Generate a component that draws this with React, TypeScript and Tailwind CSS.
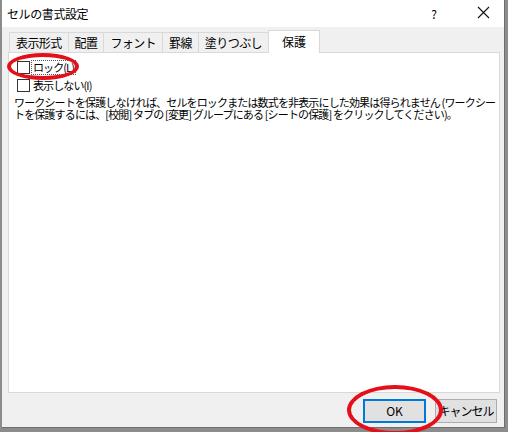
import React from 'react';

const jp = { fontFamily: '"Noto Sans CJK JP", "Noto Sans", sans-serif' };

const tabs = ['表示形式', '配置', 'フォント', '罫線', '塗りつぶし'];

// Little square checkbox in the Windows 10 style
const CheckBox: React.FC<{ label: string; focused?: boolean }> = ({ label, focused }) => (
  <div className="flex items-center h-[13px]">
    <span className="w-[13px] h-[13px] border border-[#333333] bg-white shrink-0" />
    <span
      className={`ml-[2px] px-[1px] text-[11px] leading-[13px] tracking-[-0.9px] text-black ${
        focused ? 'outline outline-1 outline-dotted outline-[#555555]' : ''
      }`}
    >
      {label}
    </span>
  </div>
);

const App: React.FC = () => {
  return (
    <div className="relative w-[508px] h-[432px] bg-[#8c8c8c] overflow-hidden" style={jp}>
      <div className="ml-[2px] w-[503px] h-[428px] flex flex-col bg-[#f0f0f0] border-r border-b border-[#6e6e6e]">
        {/* title bar */}
        <div className="h-[27px] bg-white flex items-center pl-[5px] pr-[14px]">
          <span className="text-[12px] tracking-[-0.4px] text-black">セルの書式設定</span>
          <span className="ml-auto text-[12px] text-black mr-[40px]">?</span>
          <svg width="13" height="13" viewBox="0 0 13 13" className="mb-[2px]">
            <path d="M1 1 L12 12 M12 1 L1 12" stroke="#111" strokeWidth="1.1" />
          </svg>
        </div>

        <div className="flex flex-col px-[6px]">
          {/* tab strip */}
          <div className="flex items-end h-[25px] pl-[1px]">
            {tabs.map((t) => (
              <div
                key={t}
                className="h-[20px] px-[6px] flex items-center border-t border-l border-[#d9d9d9] bg-[#f0f0f0] text-[12px] tracking-[-0.6px] text-black"
              >
                {t}
              </div>
            ))}
            <div className="relative z-10 -mb-px h-[23px] w-[52px] flex items-center justify-center border border-b-0 border-[#d9d9d9] bg-white text-[12px] text-black">
              保護
            </div>
          </div>

          {/* content panel */}
          <div className="h-[341px] w-[492px] bg-white border border-[#d9d9d9] pt-[8px] pl-[8px]">
            <div className="flex flex-col gap-[5px]">
              <CheckBox label="ロック(L)" focused />
              <CheckBox label="表示しない(I)" />
            </div>
            <div className="mt-[4px] -ml-[3px] text-[11px] leading-[12px] tracking-[-0.85px] text-black whitespace-nowrap">
              <div>ワークシートを保護しなければ、セルをロックまたは数式を非表示にした効果は得られません (ワークシー</div>
              <div>トを保護するには、[校閲] タブの [変更] グループにある [シートの保護] をクリックしてください)。</div>
            </div>
          </div>

          {/* buttons */}
          <div className="flex justify-end gap-[9px] mt-[6px] pr-[1px]">
            <button className="w-[63px] h-[24px] bg-[#e1e1e1] border-2 border-[#0078d7] text-[12px] font-normal text-black">
              OK
            </button>
            <button className="w-[62px] h-[24px] bg-[#e1e1e1] border border-[#adadad] text-[12px] tracking-[-1px] text-black">
              キャンセル
            </button>
          </div>
        </div>
      </div>

      {/* red annotation rings */}
      <div className="absolute left-[7px] top-[53px] w-[72px] h-[27px] rounded-[50%] border-[4px] border-[#e3101b]" />
      <div className="absolute left-[347px] top-[385px] w-[96px] h-[50px] rounded-[50%] border-[4px] border-[#e3101b]" />
    </div>
  );
};

export default App;
